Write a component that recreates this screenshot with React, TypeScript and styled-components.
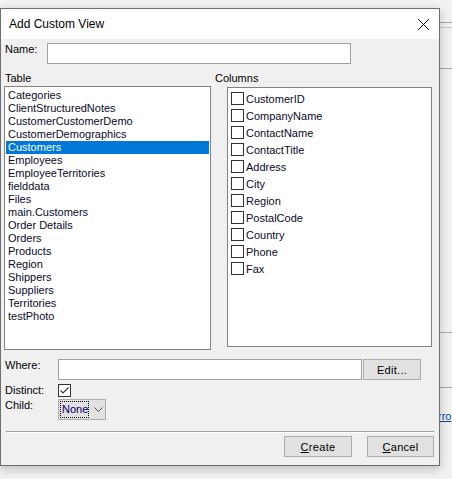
import React from 'react';
import styled, { createGlobalStyle } from 'styled-components';

const GlobalStyle = createGlobalStyle`
  html, body {
    margin: 0;
    padding: 0;
    background: #f2f2f2;
    font-family: 'Liberation Sans', Arial, sans-serif;
    font-size: 11px;
    color: #000;
  }
`;

const Desktop = styled.div`
  display: flex;
  width: 452px;
  height: 479px;
  overflow: hidden;
`;

const Dialog = styled.div`
  margin-top: 8px;
  width: 440px;
  height: 458px;
  flex-shrink: 0;
  box-sizing: border-box;
  border: 1px solid #6e6e6e;
  background: #f0f0f0;
  display: flex;
  flex-direction: column;
  box-shadow: 0 3px 10px rgba(0, 0, 0, 0.22);
  position: relative;
  z-index: 1;
`;

const TitleBar = styled.div`
  height: 30px;
  background: #fff;
  display: flex;
  align-items: center;
  justify-content: space-between;
  padding: 0 8px 0 8px;
  font-size: 12px;
`;

const CloseButton = styled.div`
  width: 14px;
  height: 14px;
  margin-right: 1px;
  display: flex;
  align-items: center;
  justify-content: center;
`;

const Body = styled.div`
  flex: 1;
  padding: 4px 4px 0 3px;
  display: flex;
  flex-direction: column;
`;

const FieldRow = styled.div<{ $top?: number }>`
  display: flex;
  align-items: flex-start;
  margin-top: ${({ $top }) => $top ?? 0}px;
`;

const Label = styled.div<{ $w: number }>`
  width: ${({ $w }) => $w}px;
  padding-left: 1px;
  line-height: 13px;
  flex-shrink: 0;
`;

const TextBox = styled.div<{ $w: number }>`
  width: ${({ $w }) => $w}px;
  height: 21px;
  box-sizing: border-box;
  border: 1px solid #a0a0a0;
  background: #fff;
`;

const ListsGrid = styled.div`
  display: grid;
  grid-template-columns: 210px 207px;
  margin-top: 8px;
`;

const Column = styled.div`
  display: flex;
  flex-direction: column;
`;

const HeaderLabel = styled.div`
  line-height: 13px;
  height: 14px;
  padding-left: 1px;
`;

const ListBox = styled.div<{ $w: number; $h: number; $left?: number; $top?: number }>`
  width: ${({ $w }) => $w}px;
  height: ${({ $h }) => $h}px;
  margin-left: ${({ $left }) => $left ?? 0}px;
  margin-top: ${({ $top }) => $top ?? 0}px;
  box-sizing: border-box;
  border: 1px solid #828282;
  background: #fff;
  padding: 2px 1px;
`;

const ListItem = styled.div<{ $selected?: boolean }>`
  height: 13px;
  line-height: 13px;
  padding-left: 2px;
  white-space: nowrap;
  background: ${({ $selected }) => ($selected ? '#0078d7' : 'transparent')};
  color: ${({ $selected }) => ($selected ? '#fff' : '#0a0a2a')};
`;

const CheckRow = styled.div`
  height: 17px;
  display: flex;
  align-items: center;
  padding-left: 2px;
  color: #0a0a2a;
`;

const Box = styled.div`
  width: 13px;
  height: 13px;
  box-sizing: border-box;
  border: 1px solid #333;
  background: #fff;
  margin-right: 2px;
  display: flex;
  align-items: center;
  justify-content: center;
  flex-shrink: 0;
`;

const PushButton = styled.div<{ $w: number }>`
  width: ${({ $w }) => $w}px;
  height: 21px;
  box-sizing: border-box;
  border: 1px solid #adadad;
  background: #e1e1e1;
  display: flex;
  align-items: center;
  justify-content: center;
  letter-spacing: 0.3px;
`;

const Combo = styled.div`
  width: 48px;
  height: 21px;
  box-sizing: border-box;
  border: 1px solid #adadad;
  background: #e1e1e1;
  display: flex;
  align-items: center;
  padding-left: 2px;
  gap: 6px;
`;

const FocusText = styled.span`
  outline: 1px dotted #000;
  line-height: 13px;
  padding: 1px 0 1px 1px;
  color: #00006a;
`;

const Separator = styled.div`
  margin: 11px 1px 0 2px;
  height: 1px;
  background: #a0a0a0;
  border-bottom: 1px solid #fff;
`;

const ButtonBar = styled.div`
  display: flex;
  justify-content: flex-end;
  gap: 15px;
  margin-top: 3px;
  padding-right: 1px;
`;

const Backdrop = styled.div`
  flex: 1;
  display: flex;
  flex-direction: column;
  background: #f2f2f2;
`;

const BackLine = styled.div<{ $top: number; $color?: string }>`
  margin-top: ${({ $top }) => $top}px;
  height: 1px;
  background: ${({ $color }) => $color ?? '#a8a8a8'};
`;

const BackLink = styled.div`
  margin-top: 22px;
  margin-left: -2px;
  color: #0645ad;
  text-decoration: underline;
  line-height: 13px;
`;

const tables = [
  'Categories',
  'ClientStructuredNotes',
  'CustomerCustomerDemo',
  'CustomerDemographics',
  'Customers',
  'Employees',
  'EmployeeTerritories',
  'fielddata',
  'Files',
  'main.Customers',
  'Order Details',
  'Orders',
  'Products',
  'Region',
  'Shippers',
  'Suppliers',
  'Territories',
  'testPhoto',
];

const columns = [
  'CustomerID',
  'CompanyName',
  'ContactName',
  'ContactTitle',
  'Address',
  'City',
  'Region',
  'PostalCode',
  'Country',
  'Phone',
  'Fax',
];

const CloseIcon = () => (
  <svg width="13" height="13" viewBox="0 0 13 13">
    <path d="M1 1 L12 12 M12 1 L1 12" stroke="#111" strokeWidth="1" fill="none" />
  </svg>
);

const CheckMark = () => (
  <svg width="11" height="11" viewBox="0 0 11 11">
    <path d="M1.5 5.5 L4 8 L9.5 2.5" stroke="#333" strokeWidth="1.1" fill="none" />
  </svg>
);

const Chevron = () => (
  <svg width="9" height="6" viewBox="0 0 9 6">
    <path d="M0.5 0.5 L4.5 4.5 L8.5 0.5" stroke="#555" strokeWidth="1" fill="none" />
  </svg>
);

const App = () => (
  <Desktop>
    <GlobalStyle />
    <Dialog>
      <TitleBar>
        <span>Add Custom View</span>
        <CloseButton>
          <CloseIcon />
        </CloseButton>
      </TitleBar>
      <Body>
        <FieldRow>
          <Label $w={42}>Name:</Label>
          <TextBox $w={304} />
        </FieldRow>

        <ListsGrid>
          <Column>
            <HeaderLabel>Table</HeaderLabel>
            <ListBox $w={207} $h={264}>
              {tables.map((t) => (
                <ListItem key={t} $selected={t === 'Customers'}>
                  {t}
                </ListItem>
              ))}
            </ListBox>
          </Column>
          <Column>
            <HeaderLabel>Columns</HeaderLabel>
            <ListBox $w={205} $h={260} $left={13} $top={1}>
              {columns.map((c) => (
                <CheckRow key={c}>
                  <Box />
                  {c}
                </CheckRow>
              ))}
            </ListBox>
          </Column>
        </ListsGrid>

        <FieldRow $top={9}>
          <Label $w={53}>Where:</Label>
          <TextBox $w={304} />
          <PushButton $w={58} style={{ marginLeft: 1 }}>
            Edit...
          </PushButton>
        </FieldRow>

        <FieldRow $top={4}>
          <Label $w={53}>Distinct:</Label>
          <Box>
            <CheckMark />
          </Box>
        </FieldRow>

        <FieldRow $top={2}>
          <Label $w={53}>Child:</Label>
          <Combo>
            <FocusText>None</FocusText>
            <Chevron />
          </Combo>
        </FieldRow>

        <Separator />

        <ButtonBar>
          <PushButton $w={68}>
            <span>
              <u>C</u>reate
            </span>
          </PushButton>
          <PushButton $w={67}>
            <span>
              <u>C</u>ancel
            </span>
          </PushButton>
        </ButtonBar>
      </Body>
    </Dialog>
    <Backdrop>
      <BackLine $top={22} />
      <BackLine $top={4} $color="#c8c8c8" />
      <BackLine $top={40} />
      <BackLine $top={263} $color="#b0b0b0" />
      <BackLine $top={54} />
      <BackLink>rro</BackLink>
    </Backdrop>
  </Desktop>
);

export default App;
